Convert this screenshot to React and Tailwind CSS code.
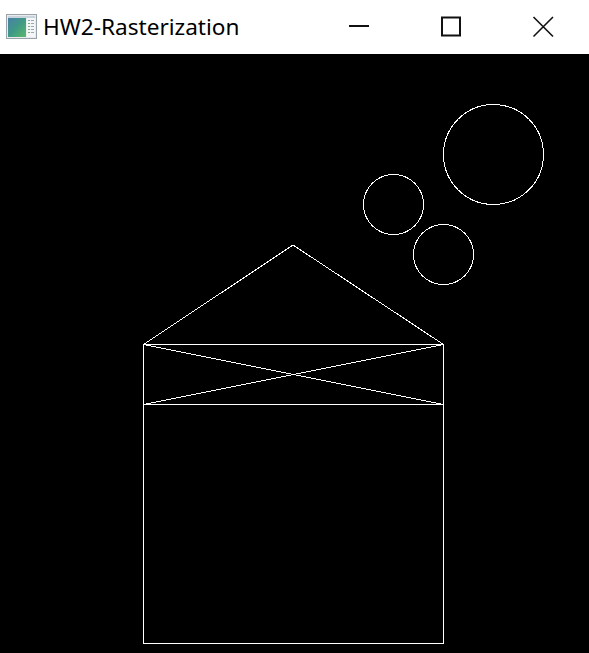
import React from "react";

function AppIcon() {
  return (
    <svg width="31" height="25" viewBox="0 0 31 25" className="shrink-0">
      <defs>
        <linearGradient id="g1" x1="0" y1="0" x2="1" y2="1">
          <stop offset="0" stopColor="#4a7fa8" />
          <stop offset="0.5" stopColor="#3f9a86" />
          <stop offset="1" stopColor="#5cb86a" />
        </linearGradient>
      </defs>
      <rect x="0.5" y="0.5" width="30" height="24" fill="#e8ecef" stroke="#9aa3aa" />
      <rect x="2" y="2" width="27" height="2" fill="#c9d3dc" />
      <rect x="2" y="4" width="18" height="19" fill="url(#g1)" />
      <rect x="21" y="4" width="8" height="19" fill="#f4f6f7" />
      <rect x="22" y="6" width="2" height="1" fill="#7aa0b8" />
      <rect x="25" y="6" width="3" height="1" fill="#9aa8b0" />
      <rect x="22" y="9" width="2" height="1" fill="#6fae8a" />
      <rect x="25" y="9" width="3" height="1" fill="#9aa8b0" />
      <rect x="22" y="12" width="2" height="1" fill="#6fae8a" />
      <rect x="25" y="12" width="3" height="1" fill="#9aa8b0" />
      <rect x="22" y="15" width="2" height="1" fill="#7ab07a" />
      <rect x="25" y="15" width="3" height="1" fill="#9aa8b0" />
      <rect x="22" y="18" width="2" height="1" fill="#7ab07a" />
      <rect x="25" y="18" width="3" height="1" fill="#9aa8b0" />
    </svg>
  );
}

export default function App() {
  const o = 54;
  return (
    <div className="w-[589px] h-[653px] flex flex-col bg-black overflow-hidden">
      <div className="h-[54px] bg-white flex items-center shrink-0">
        <div className="ml-[6px] mt-[-1px]">
          <AppIcon />
        </div>
        <span
          className="ml-[6px] text-[22.6px] text-black leading-none mt-[1px]"
          style={{ fontFamily: '"Segoe UI", "Noto Sans", sans-serif' }}
        >
          HW2-Rasterization
        </span>
        <div className="ml-auto flex items-center h-full">
          <div className="w-[92px] h-full flex items-center justify-center">
            <svg width="22" height="22" viewBox="0 0 22 22" className="mt-[-2px]">
              <rect x="1" y="10" width="20" height="2" fill="#111" />
            </svg>
          </div>
          <div className="w-[92px] h-full flex items-center justify-center">
            <svg width="22" height="22" viewBox="0 0 22 22">
              <rect x="2" y="1.5" width="18" height="18" fill="none" stroke="#111" strokeWidth="2" />
            </svg>
          </div>
          <div className="w-[92px] h-full flex items-center justify-center">
            <svg width="22" height="22" viewBox="0 0 22 22">
              <path d="M1.5 1 L21 20.5 M21 1 L1.5 20.5" stroke="#111" strokeWidth="1.6" fill="none" />
            </svg>
          </div>
        </div>
      </div>
      <div className="flex-1 bg-black">
        <svg width="589" height="599" viewBox="0 0 589 599" className="block">
          <g stroke="#fff" strokeWidth="1" fill="none" shapeRendering="crispEdges">
            <line x1="143.5" y1={344.5 - o} x2="443.5" y2={344.5 - o} />
            <line x1="143.5" y1={404.5 - o} x2="443.5" y2={404.5 - o} />
            <line x1="143.5" y1={643.5 - o} x2="443.5" y2={643.5 - o} />
            <line x1="143.5" y1={344.5 - o} x2="143.5" y2={643.5 - o} />
            <line x1="443.5" y1={344.5 - o} x2="443.5" y2={643.5 - o} />
            <line x1="143.5" y1={344.5 - o} x2="293" y2={245 - o} />
            <line x1="293" y1={245 - o} x2="443.5" y2={344.5 - o} />
            <line x1="143.5" y1={344.5 - o} x2="443.5" y2={404.5 - o} />
            <line x1="143.5" y1={404.5 - o} x2="443.5" y2={344.5 - o} />
            <circle cx="493.5" cy={154.5 - o} r="50" />
            <circle cx="393.5" cy={204.5 - o} r="30" />
            <circle cx="443.5" cy={254.5 - o} r="30" />
          </g>
        </svg>
      </div>
    </div>
  );
}
